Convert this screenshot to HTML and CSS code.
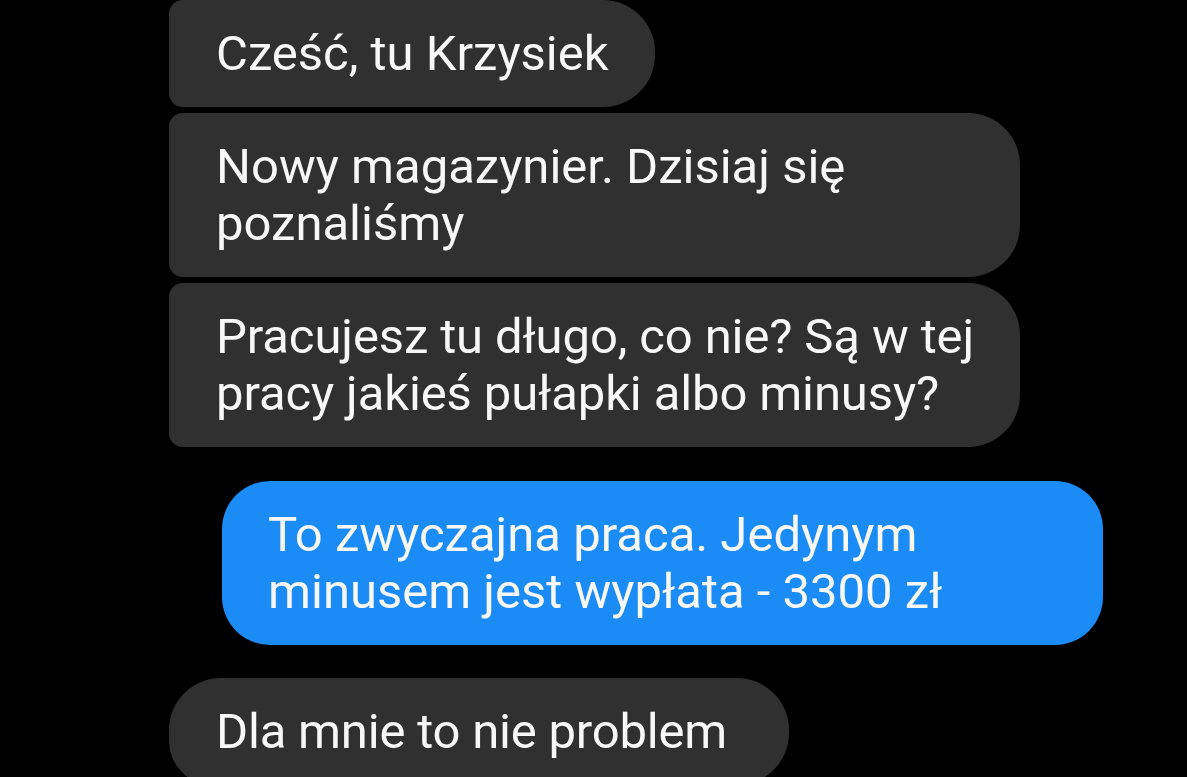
FILE: index.html
```html
<!DOCTYPE html>
<html lang="pl">
<head>
  <meta charset="UTF-8">
  <title>Rozmowa</title>
  <link rel="stylesheet" href="styles.css">
</head>
<body>

  <div class="chat">
    <div class="bubble incoming">Cześć, tu Krzysiek</div>
    <div class="bubble incoming">Nowy magazynier. Dzisiaj się<br>poznaliśmy</div>
    <div class="bubble incoming tight">Pracujesz tu długo, co nie? Są w tej<br>pracy jakieś pułapki albo minusy?</div>
    <div class="bubble outgoing">To zwyczajna praca. Jedynym<br>minusem jest wypłata - 3300 zł</div>
    <div class="bubble incoming new-group">Dla mnie to nie problem</div>
  </div>

</body>
</html>
```

FILE: styles.css
```css
* {
  box-sizing: border-box;
}

html, body {
  margin: 0;
  padding: 0;
  background: #000;
  height: 100%;
  overflow: hidden;
}

body {
  font-family: Roboto, 'Noto Sans', sans-serif;
  color: #f7f7f7;
}

.chat {
  display: flex;
  flex-direction: column;
  padding: 0 84px 0 169px;
  gap: 6px;
}

.bubble {
  font-size: 49px;
  line-height: 57px;
  padding: 25px 46px 25px 47px;
  white-space: nowrap;
}

.incoming {
  align-self: flex-start;
  min-width: 0;
  background-color: #303030;
  border-radius: 14px 52px 52px 14px;
}

/* wrapped bubbles fill the max width, like on the phone */
.incoming:has(br) {
  width: 851px;
}

.tight {
  letter-spacing: -0.12px;
}

.outgoing {
  align-self: flex-end;
  width: 881px;
  margin: 28px 0 27px;
  padding-left: 46px;
  background-color: #1b8cf6;
  border-radius: 48px;
}

.new-group {
  padding-right: 62px;
  letter-spacing: -0.2px;
  border-radius: 52px 52px 52px 44px;
}
```
